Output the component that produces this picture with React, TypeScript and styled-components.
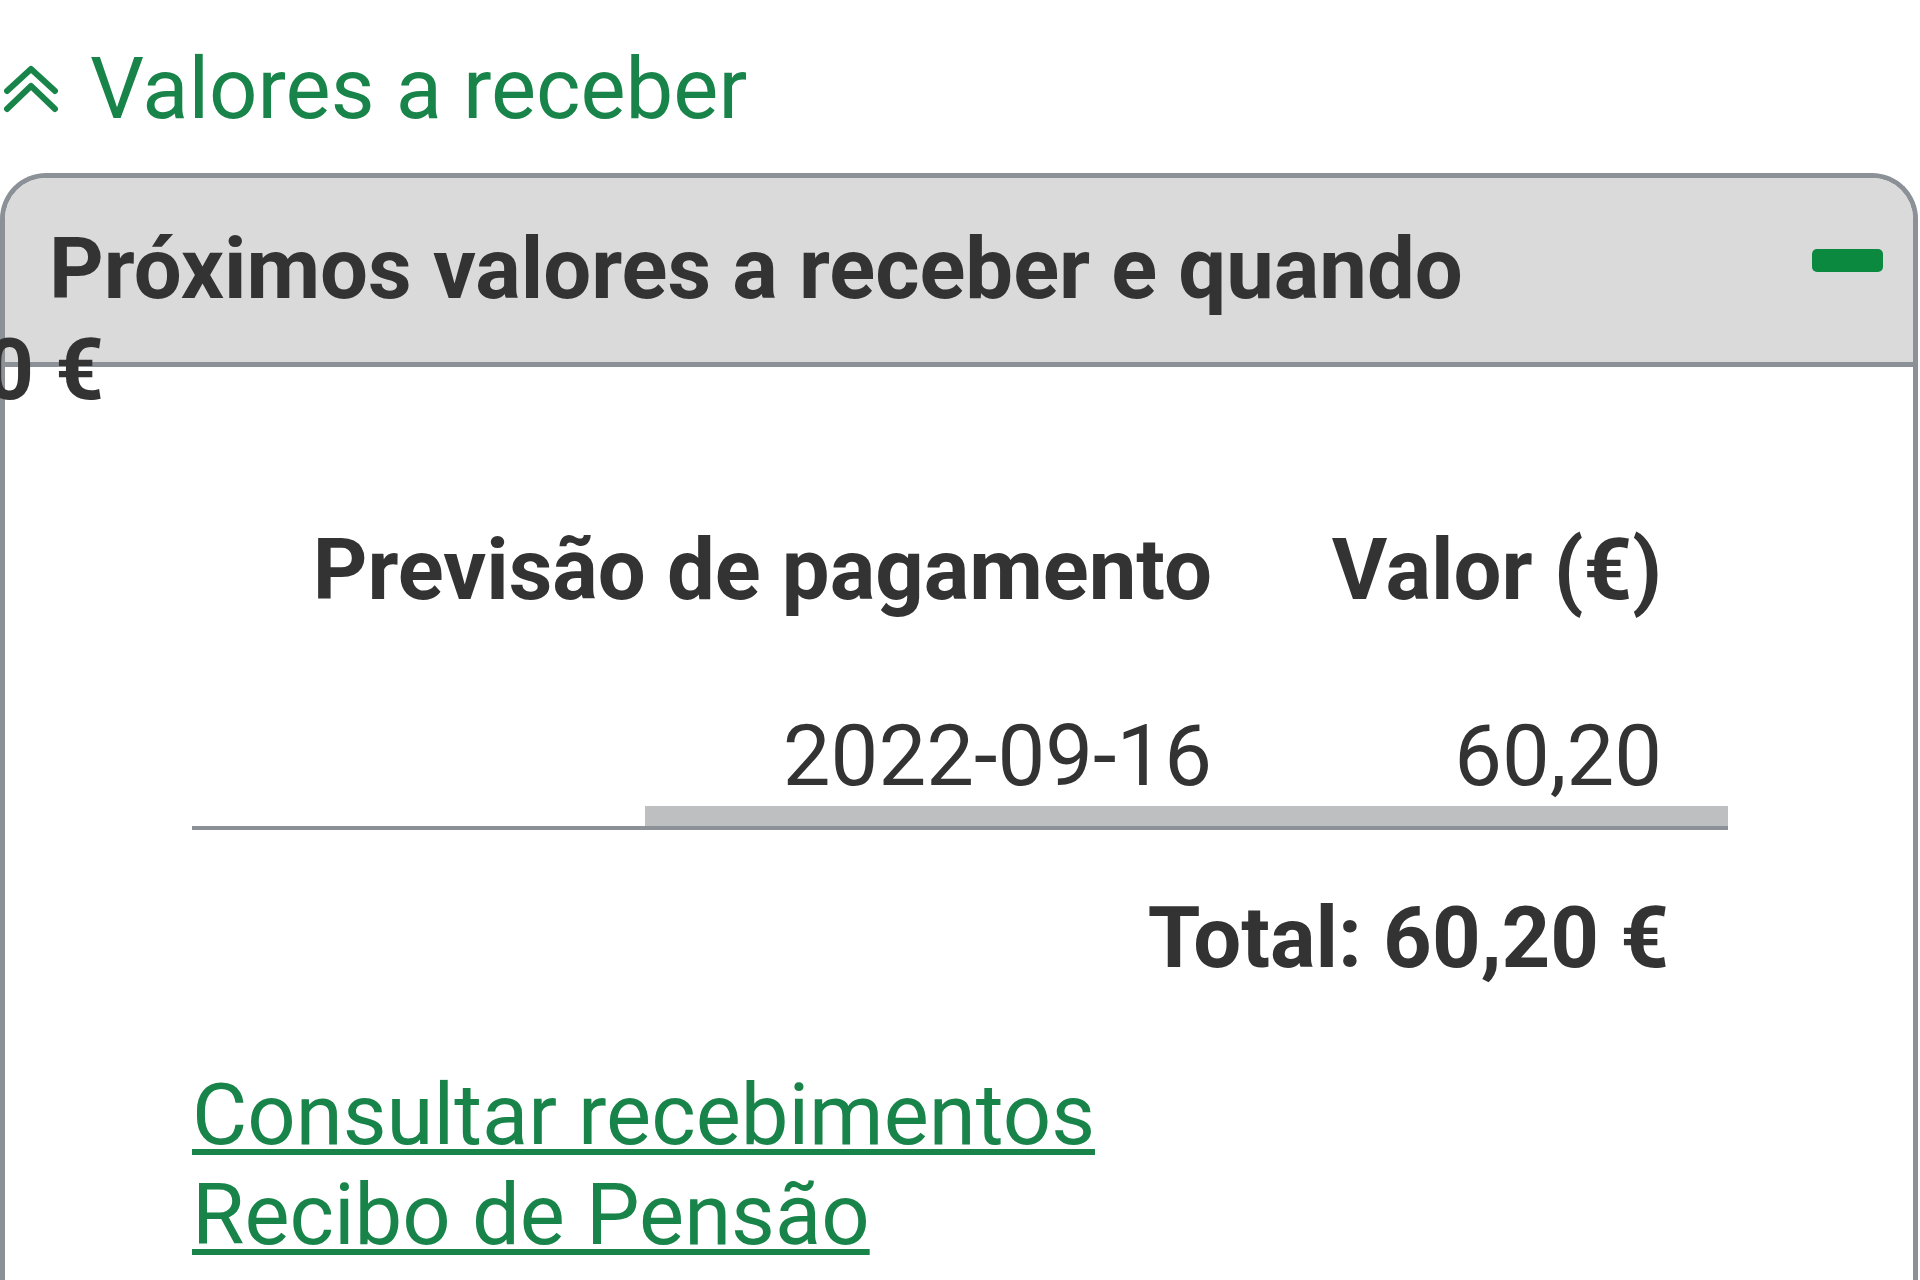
import React, { useState } from "react";
import styled, { createGlobalStyle } from "styled-components";

const GREEN = "#18844a";
const INK = "#333333";
const RULE = "#8b9197";
const TEXT_SIZE = "85px";

const GlobalStyle = createGlobalStyle`
  html, body {
    margin: 0;
    padding: 0;
    background: #ffffff;
  }
  body {
    width: 1920px;
    height: 1280px;
    overflow: hidden;
    font-family: Roboto, "Liberation Sans", Arial, sans-serif;
    color: ${INK};
  }
  * {
    box-sizing: border-box;
  }
`;

const Page = styled.main`
  padding-top: 39px;
`;

const SectionToggle = styled.button`
  display: flex;
  align-items: center;
  gap: 32px;
  padding: 0 0 0 4px;
  border: 0;
  background: none;
  color: ${GREEN};
  font-family: Roboto, "Liberation Sans", Arial, sans-serif;
  font-size: ${TEXT_SIZE};
  font-weight: 400;
  line-height: 100px;
  cursor: pointer;
`;

const Card = styled.section`
  position: relative;
  width: 1918px;
  min-height: 1200px;
  margin-top: 34px;
  border: 5px solid ${RULE};
  border-bottom: none;
  border-radius: 46px 46px 0 0;
`;

const CardHeader = styled.header`
  display: flex;
  justify-content: space-between;
  align-items: flex-start;
  padding: 41px 30px 43px 44px;
  background: #dadada;
  border-bottom: 5px solid ${RULE};
  border-radius: 41px 41px 0 0;
`;

const CardTitle = styled.h2`
  margin: 0;
  font-size: ${TEXT_SIZE};
  font-weight: 700;
  line-height: 100px;
  color: ${INK};
`;

const Collapse = styled.button`
  width: 71px;
  height: 23px;
  margin-top: 30px;
  padding: 0;
  border: 0;
  border-radius: 5px;
  background: #0b8a3f;
  cursor: pointer;
`;

const StrayAmount = styled.span`
  position: absolute;
  top: 142px;
  right: calc(100% - 99px);
  z-index: 1;
  white-space: nowrap;
  font-size: ${TEXT_SIZE};
  font-weight: 700;
  line-height: 100px;
  color: ${INK};
`;

const Table = styled.div`
  display: grid;
  grid-template-columns: 453px 633px 450px;
  width: 1536px;
  margin: 153px 0 0 187px;
  border-bottom: 4px solid ${RULE};
`;

const HeadCell = styled.div<{ $span?: number }>`
  grid-column: span ${(p) => p.$span ?? 1};
  padding: 0 66px 86px 0;
  text-align: right;
  font-size: ${TEXT_SIZE};
  font-weight: 700;
  line-height: 100px;
  white-space: nowrap;
`;

const Cell = styled.div<{ $empty?: boolean }>`
  padding: 0 66px 0 0;
  text-align: right;
  font-size: ${TEXT_SIZE};
  font-weight: 400;
  line-height: 100px;
  border-bottom: ${(p) => (p.$empty ? "none" : "20px solid #bebfc1")};
  align-self: end;
`;

const Total = styled.div`
  width: 1536px;
  margin: 58px 0 0 187px;
  padding-right: 59px;
  text-align: right;
  font-size: ${TEXT_SIZE};
  font-weight: 700;
  line-height: 100px;
`;

const Links = styled.nav`
  display: flex;
  flex-direction: column;
  align-items: flex-start;
  margin: 77px 0 0 187px;
`;

const Link = styled.a`
  color: ${GREEN};
  font-size: ${TEXT_SIZE};
  line-height: 100px;
  text-decoration: underline;
  text-decoration-thickness: 6px;
  text-underline-offset: 5px;
`;

const DoubleChevron = () => (
  <svg width="54" height="48" viewBox="0 0 54 48" fill="none">
    <polyline
      points="3,26 27,4 51,26"
      stroke={GREEN}
      strokeWidth="6"
      strokeLinecap="round"
      strokeLinejoin="round"
    />
    <polyline
      points="3,44 27,21 51,44"
      stroke={GREEN}
      strokeWidth="6"
      strokeLinecap="round"
      strokeLinejoin="round"
    />
  </svg>
);

const payments = [{ date: "2022-09-16", amount: "60,20" }];

function App() {
  const [open, setOpen] = useState(true);
  return (
    <Page>
      <GlobalStyle />
      <SectionToggle onClick={() => setOpen(!open)}>
        <DoubleChevron />
        Valores a receber
      </SectionToggle>
      <Card>
        <CardHeader>
          <CardTitle>Próximos valores a receber e quando</CardTitle>
          <Collapse aria-label="Fechar" />
        </CardHeader>
        <StrayAmount>60,20 €</StrayAmount>
        <Table>
          <HeadCell $span={2}>Previsão de pagamento</HeadCell>
          <HeadCell>Valor (€)</HeadCell>
          {payments.map((p) => (
            <React.Fragment key={p.date}>
              <Cell $empty />
              <Cell>{p.date}</Cell>
              <Cell>{p.amount}</Cell>
            </React.Fragment>
          ))}
        </Table>
        <Total>Total: 60,20 €</Total>
        <Links>
          <Link href="#">Consultar recebimentos</Link>
          <Link href="#">Recibo de Pensão</Link>
        </Links>
      </Card>
    </Page>
  );
}

export default App;
